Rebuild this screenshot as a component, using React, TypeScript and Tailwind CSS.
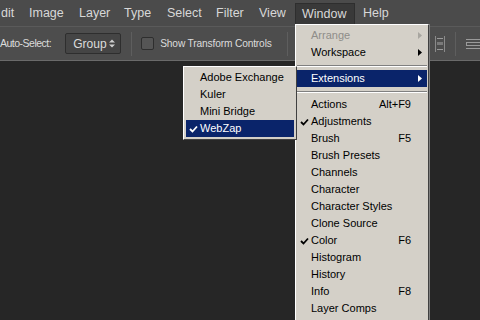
import React from 'react';

const menuNames: { name: string; w: string }[] = [
  { name: 'dit', w: 'w-[29px] pl-[1px]' },
  { name: 'Image', w: 'w-[50px]' },
  { name: 'Layer', w: 'w-[45px]' },
  { name: 'Type', w: 'w-[43px]' },
  { name: 'Select', w: 'w-[49px]' },
  { name: 'Filter', w: 'w-[43px]' },
  { name: 'View', w: 'w-[36px]' },
];

interface Item {
  label?: string;
  shortcut?: string;
  checked?: boolean;
  disabled?: boolean;
  sub?: boolean;
  active?: boolean;
  sep?: boolean;
}

const windowItems: Item[] = [
  { label: 'Arrange', disabled: true, sub: true },
  { label: 'Workspace', sub: true },
  { sep: true },
  { label: 'Extensions', sub: true, active: true },
  { sep: true },
  { label: 'Actions', shortcut: 'Alt+F9' },
  { label: 'Adjustments', checked: true },
  { label: 'Brush', shortcut: 'F5' },
  { label: 'Brush Presets' },
  { label: 'Channels' },
  { label: 'Character' },
  { label: 'Character Styles' },
  { label: 'Clone Source' },
  { label: 'Color', checked: true, shortcut: 'F6' },
  { label: 'Histogram' },
  { label: 'History' },
  { label: 'Info', shortcut: 'F8' },
  { label: 'Layer Comps' },
];

const extItems: Item[] = [
  { label: 'Adobe Exchange' },
  { label: 'Kuler' },
  { label: 'Mini Bridge' },
  { label: 'WebZap', checked: true, active: true },
];

const Check: React.FC<{ color: string }> = ({ color }) => (
  <svg width="9" height="8" viewBox="0 0 9 8">
    <path d="M1 4 L3.5 6.5 L8 1.5" stroke={color} strokeWidth="1.8" fill="none" />
  </svg>
);

const Arrow: React.FC<{ color: string }> = ({ color }) => (
  <svg width="4" height="7" viewBox="0 0 4 7">
    <path d="M0 0 L4 3.5 L0 7 Z" fill={color} />
  </svg>
);

const MenuRow: React.FC<{ item: Item }> = ({ item }) => {
  if (item.sep) {
    return (
      <div className="h-[9px] flex items-center">
        <div className="w-full h-[2px] border-t border-[#808080] border-b border-b-white" />
      </div>
    );
  }
  const fg = item.active ? '#ffffff' : item.disabled ? '#8f8d88' : '#000000';
  return (
    <div
      className={`h-[17px] flex items-center pr-[5px] ${item.active ? 'bg-[#0a246a]' : ''}`}
      style={{ color: fg }}
    >
      <div className="w-[14px] shrink-0 flex justify-center">{item.checked && <Check color={fg} />}</div>
      <span className="flex-1 whitespace-nowrap">{item.label}</span>
      {item.shortcut && <span className="ml-4 whitespace-nowrap pr-[11px]">{item.shortcut}</span>}
      {item.sub && <Arrow color={item.disabled ? '#a8a6a0' : fg} />}
    </div>
  );
};

const Divider: React.FC<{ className?: string }> = ({ className = '' }) => (
  <div className={`w-px h-[24px] bg-[#383838] border-r border-[#5e5e5e] ${className}`} />
);

export default function App() {
  return (
    <div
      className="relative w-[480px] h-[320px] overflow-hidden bg-[#262626] flex flex-col"
      style={{ fontFamily: '"Liberation Sans", Arial, sans-serif' }}
    >
      {/* menu bar */}
      <div className="h-[26px] bg-[#4b4b4b] flex items-end text-[12.5px] text-[#d8d8d8] shrink-0">
        {menuNames.map((m) => (
          <div key={m.name} className={`h-[23px] flex items-center pb-[2px] ${m.w}`}>
            {m.name}
          </div>
        ))}
        <div className="h-[23px] w-[60px] flex items-center pl-[6px] pb-[2px] bg-[#393939] border border-[#2e2e2e] border-b-0">
          Window
        </div>
        <div className="h-[23px] flex items-center pl-[8px] pb-[2px]">Help</div>
      </div>

      {/* options bar */}
      <div className="h-[35px] bg-[#4d4d4d] border-t border-[#5a5a5a] border-b border-b-[#6a6a6a] flex items-center text-[#dcdcdc] shrink-0">
        <span className="text-[10.5px] tracking-[-0.5px]">Auto-Select:</span>
        <div className="ml-[14px] w-[56px] h-[21px] rounded-[2px] bg-[#454545] border border-[#2e2e2e] flex items-center justify-between pl-[7px] pr-[5px] text-[12px]">
          <span>Group</span>
          <svg width="6" height="9" viewBox="0 0 6 9">
            <path d="M0 3.5 L3 0.5 L6 3.5 Z M0 5.5 L3 8.5 L6 5.5 Z" fill="#d0d0d0" />
          </svg>
        </div>
        <Divider className="ml-[10px]" />
        <div className="ml-[9px] w-[13px] h-[13px] rounded-[2px] bg-[#555555] border border-[#2e2e2e]" />
        <span className="ml-[6px] text-[10.2px] tracking-[-0.15px]">Show Transform Controls</span>
        <Divider className="ml-[15px]" />
        <div className="flex-1" />
        <div className="w-[10px] h-[16px] flex flex-col justify-between py-[2px] mr-[10px] border-x border-[#8a8a8a] px-[1px]">
          <div className="h-px bg-[#9a9a9a]" />
          <div className="h-[3px] bg-[#7a7a7a]" />
          <div className="h-px bg-[#9a9a9a]" />
        </div>
        <Divider className="mr-[10px]" />
        <div className="w-[16px] h-[14px] flex flex-col justify-between py-[2px] -mr-[2px]">
          <div className="h-px bg-[#9a9a9a]" />
          <div className="h-[4px] border border-[#9a9a9a]" />
          <div className="h-px bg-[#9a9a9a]" />
        </div>
      </div>

      {/* canvas */}
      <div className="flex-1 bg-[#262626]" />

      {/* Window menu */}
      <div className="absolute left-[295px] top-[24px] w-[134px] h-[300px] bg-[#d4d0c8] border border-t-white border-l-white border-r-[#404040] border-b-[#404040] shadow-[1px_0_0_#808080] pt-[2px] px-[1px] text-[11px]">
        {windowItems.map((it, i) => (
          <MenuRow key={i} item={it} />
        ))}
      </div>

      {/* Extensions submenu */}
      <div className="absolute left-[183px] top-[66px] w-[114px] bg-[#d4d0c8] border border-t-white border-l-white border-r-[#404040] border-b-[#404040] py-[2px] px-[2px] text-[11px]">
        {extItems.map((it, i) => (
          <MenuRow key={i} item={it} />
        ))}
      </div>
    </div>
  );
}
